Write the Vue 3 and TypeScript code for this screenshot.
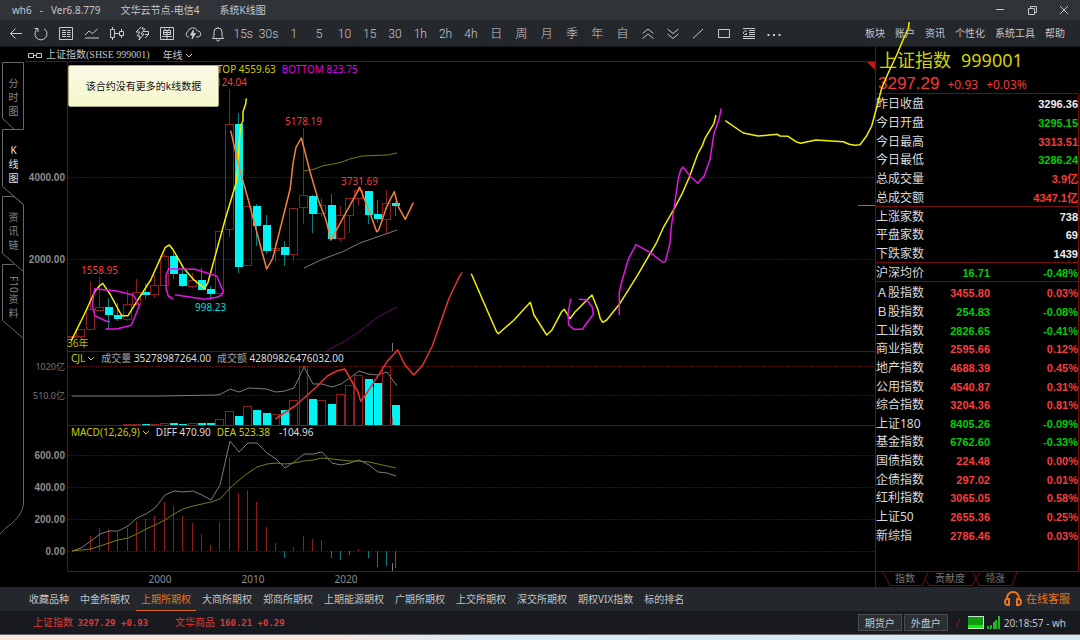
<script setup lang="ts">
interface QuoteRow {
  label: string
  value?: string
  change: string
  tone: 'up' | 'down' | 'flat'
}

const menus: string[] = ['板块', '账户', '资讯', '个性化', '系统工具', '帮助']
const periods: string[] = ['15s', '30s', '1', '5', '10', '15', '30', '1h', '2h', '4h', '日', '周', '月', '季', '年', '自']
const markets: string[] = ['收藏品种', '中金所期权', '上期所期权', '大商所期权', '郑商所期权', '上期能源期权', '广期所期权', '上交所期权', '深交所期权', '期权VIX指数', '标的排名']
const activeMarket = '上期所期权'
const sideTabs: { parts: string[]; active?: boolean }[] = [
  { parts: ['分', '时', '图'] },
  { parts: ['K', '线', '图'], active: true },
  { parts: ['资', '讯', '链'] },
  { parts: ['F10', '资', '料'] },
]

const quoteGroups: { name: string; rows: QuoteRow[] }[] = [
  {
    name: 'day',
    rows: [
      { label: '昨日收盘', change: '3296.36', tone: 'flat' },
      { label: '今日开盘', change: '3295.15', tone: 'down' },
      { label: '今日最高', change: '3313.51', tone: 'up' },
      { label: '今日最低', change: '3286.24', tone: 'down' },
      { label: '总成交量', change: '3.9亿', tone: 'up' },
      { label: '总成交额', change: '4347.1亿', tone: 'up' },
    ],
  },
  {
    name: 'breadth',
    rows: [
      { label: '上涨家数', change: '738', tone: 'flat' },
      { label: '平盘家数', change: '69', tone: 'flat' },
      { label: '下跌家数', change: '1439', tone: 'flat' },
    ],
  },
  { name: 'average', rows: [{ label: '沪深均价', value: '16.71', change: '-0.48%', tone: 'down' }] },
  {
    name: 'indices',
    rows: [
      { label: 'Ａ股指数', value: '3455.80', change: '0.03%', tone: 'up' },
      { label: 'Ｂ股指数', value: '254.83', change: '-0.08%', tone: 'down' },
      { label: '工业指数', value: '2826.65', change: '-0.41%', tone: 'down' },
      { label: '商业指数', value: '2595.66', change: '0.12%', tone: 'up' },
      { label: '地产指数', value: '4688.39', change: '0.45%', tone: 'up' },
      { label: '公用指数', value: '4540.87', change: '0.31%', tone: 'up' },
      { label: '综合指数', value: '3204.36', change: '0.81%', tone: 'up' },
      { label: '上证180', value: '8405.26', change: '-0.09%', tone: 'down' },
      { label: '基金指数', value: '6762.60', change: '-0.33%', tone: 'down' },
      { label: '国债指数', value: '224.48', change: '0.00%', tone: 'up' },
      { label: '企债指数', value: '297.02', change: '0.01%', tone: 'up' },
      { label: '红利指数', value: '3065.05', change: '0.58%', tone: 'up' },
      { label: '上证50', value: '2655.36', change: '0.25%', tone: 'up' },
      { label: '新综指', value: '2786.46', change: '0.03%', tone: 'up' },
    ],
  },
]

const yearX = (year: number): number => 72 + (year - 1990) * 9.27

/* [rising, body top, body bottom, wick top, wick bottom] for each year from 1990 */
const candleData: [number, number, number, number, number][] = [
  [1, 336, 337, 336, 337], [1, 329, 336, 329, 338], [1, 309, 329, 282, 329], [1, 307, 310, 277, 311],
  [0, 307, 315, 298, 329], [0, 315, 319, 303, 321], [1, 304, 319, 290, 321], [1, 292, 304, 279, 304],
  [0, 292, 295, 283, 299], [1, 285, 294, 275, 298], [1, 256, 285, 254, 285], [0, 256, 274, 249, 279],
  [0, 274, 286, 268, 287], [1, 280, 286, 273, 288], [0, 280, 290, 268, 290], [0, 289, 294, 286, 300],
  [1, 231, 293, 231, 294], [1, 124, 229, 89, 237], [0, 124, 267, 113, 273], [1, 206, 265, 206, 266],
  [0, 206, 226, 204, 246], [0, 225, 251, 215, 254], [1, 248, 250, 242, 262], [0, 247, 255, 241, 266],
  [1, 208, 254, 208, 261], [1, 195, 207, 128, 224], [0, 196, 214, 195, 233], [1, 205, 213, 198, 217],
  [0, 205, 239, 194, 240], [1, 215, 238, 206, 241], [1, 198, 215, 198, 233], [1, 190, 198, 187, 205],
  [0, 191, 215, 191, 224], [0, 214, 219, 200, 223], [1, 203, 219, 190, 234], [0, 203, 206, 201, 216],
]
const candles = candleData.map(([up, top, bottom, high, low], i) => ({
  up: up === 1, top, bottom, high, low, x: Math.round(yearX(1990 + i)),
}))

/* Top edge of each volume bar, from 1996 */
const volumeTops: number[] = [
  424, 424, 424, 424, 423, 423, 424, 423, 423, 423, 419, 411, 416, 406, 410, 413, 414, 410, 400, 366,
  399, 400, 404, 394, 385, 375, 379, 383, 366, 405,
]
const volumes = volumeTops.map((top, i) => ({ top, up: candles[i + 6].up, x: candles[i + 6].x }))

/* Histogram end of each MACD bar, from 1992 */
const macdEnds: number[] = [
  536, 528, 529, 532, 528, 521, 519, 516, 502, 506, 516, 523, 534, 545, 522, 458, 493, 490, 502, 527,
  543, 558, 547, 536, 539, 540, 558, 560, 555, 549, 558, 567, 566, 568,
]
const macdBars = macdEnds.map((end, i) => ({ end, x: Math.round(yearX(1992 + i)) }))

const perYear = (ys: number[]): string => ys.map((y, i) => `${Math.round(yearX(1990 + i))},${y}`).join(' ')
const diffLine = perYear([
  551, 548, 541, 534, 531, 531, 526, 518, 514, 508, 495, 491, 492, 491, 495, 500, 485, 441, 452, 443,
  443, 453, 459, 468, 462, 454, 454, 452, 463, 465, 463, 460, 465, 472, 473, 476,
])
const deaLine = perYear([
  551, 550, 549, 546, 543, 540, 538, 534, 529, 525, 520, 514, 509, 506, 504, 502, 499, 488, 480, 473,
  467, 464, 463, 464, 463, 461, 460, 458, 459, 460, 461, 461, 462, 464, 466, 468,
])
const openInterest = '72,396 160,396 217,395 221,394 230,389 239,392 249,388 266,389 276,392 285,391 294,388 304,367 313,384 322,384 332,387 341,384 350,378 359,371 368,374 378,375 387,372 397,386'

/* Pencil strokes are stored on a grid three times finer than the canvas. */
const stroke = (ox: number, oy: number, points: string): string =>
  points.split(' ').map((p) => {
    const [x, y] = p.split(',').map(Number)
    return `${(ox + x / 3).toFixed(1)},${(oy + y / 3).toFixed(1)}`
  }).join(' ')

const pencils: { tone: string; points: string }[] = [
  { tone: 'yellow', points: stroke(60, 220, '34,362 72,285 104,215 118,198 128,190 150,222 180,278 186,287 204,287 230,245 272,180 316,82 328,75 340,90 370,143 400,178 434,205 444,187 495,0 528,-110 534,-160 538,-240 542,-285 549,-297 549,-325 557,-348 559,-365') },
  { tone: 'orange', points: stroke(220, 60, '32,212 57,320 85,420 125,572 140,627 158,595 185,488 211,385 219,310 228,262 244,234 252,265 270,335 295,420 318,480 333,540 385,445 419,382 450,460 470,515 476,510 500,440 523,395 535,440 556,478 580,428') },
  { tone: 'magenta', points: stroke(60, 220, '150,305 138,303 104,287 97,255 104,206 170,213 220,225 238,257 214,316 170,327 136,327') },
  { tone: 'magenta', points: stroke(60, 220, '339,237 325,228 318,205 318,165 326,146 405,148 470,168 490,213 485,225 470,232 434,238 345,224') },
  { tone: 'red', points: stroke(0, 340, '826,237 885,198 950,140 982,108 1010,93 1034,87 1074,156 1082,184 1100,160 1163,62 1193,30 1215,75 1241,105 1268,75 1297,18 1347,-125 1378,-190 1386,-203') },
  { tone: 'yellow', points: stroke(400, 260, '214,41 270,170 290,216 295,221 340,182 391,127 402,165 440,225 455,211 485,155 493,148 510,176 525,156 576,105 594,150 601,176 608,187 620,180 658,133 710,50 770,-53 790,-97 822,-153 847,-200 868,-248 893,-318 907,-343 915,-365 942,-410 948,-435') },
  { tone: 'yellow', points: stroke(600, 90, '376,92 430,129 475,138 532,133 540,138 564,139 588,155 602,160 648,150 730,155 748,163 765,166 780,164 800,137 815,108 828,60 845,-5 862,-45 890,-105 910,-152 925,-185 928,-204') },
  { tone: 'magenta', points: stroke(400, 260, '512,116 504,160 506,195 522,208 547,208 580,163 577,142 560,119 536,118') },
  { tone: 'magenta', points: stroke(600, 90, '58,675 58,605 68,565 86,505 108,464 150,487 187,516 196,515 210,460 214,410 222,355 235,265 242,240 249,231 270,258 293,280 313,257 330,208 342,130 357,88 364,55') },
]

const gridRows: number[] = [177, 259, 366, 395, 455, 487, 519, 551]
const frameRows: number[] = [351, 425, 571]
const axisLabels: { y: number; text: string; light?: boolean }[] = [
  { y: 181, text: '4000.00' }, { y: 263, text: '2000.00' },
  { y: 370, text: '1020亿', light: true }, { y: 399, text: '510.0亿', light: true },
  { y: 459, text: '600.00' }, { y: 491, text: '400.00' }, { y: 523, text: '200.00' }, { y: 555, text: '0.00' },
]
</script>

<template>
  <div class="app">
    <header class="titlebar">
      <span class="caption version"><span>wh6</span><span>-</span><span>Ver6.8.779</span></span>
      <span class="caption">文华云节点-电信4</span>
      <span class="caption">系统K线图</span>
      <div class="window-controls">
        <button type="button" aria-label="最小化"><svg width="12" height="12"><path d="M2 5.500H10" /></svg></button>
        <button type="button" aria-label="还原"><svg width="12" height="12"><path d="M2.500 4.500H8.500V10.500H2.500ZM4.500 4.500V2.500H10.500V8.500H8.500" /></svg></button>
        <button type="button" aria-label="关闭"><svg width="12" height="12"><path d="M2 2L10 10M10 2L2 10" /></svg></button>
      </div>
    </header>

    <nav class="toolbar" aria-label="工具栏">
      <div class="tools">
        <button type="button" aria-label="后退"><svg viewBox="0 0 18 18"><path d="M15 8.500H3.500M8.500 3.500L3.500 8.500L8.500 13.500" /></svg></button>
        <button type="button" aria-label="刷新"><svg viewBox="0 0 18 18"><path d="M5.500 4A6 6 0 1 0 12 3.700M2.500 3.500H6V7" /></svg></button>
        <button type="button" aria-label="报价"><svg viewBox="0 0 18 18"><path d="M2.500 2.500H15.500V14.500H2.500ZM5 5.500H9M10 5.500H13.500M5 7.500H9M10 7.500H13.500M5 9.500H9M10 9.500H13.500M5 11.500H9M10 11.500H13.500" /></svg></button>
        <button type="button" aria-label="分时"><svg viewBox="0 0 18 18"><path d="M2 10L6 6L9.500 8.500L14.500 4M2 13H16" /></svg></button>
        <button type="button" aria-label="K线"><svg viewBox="0 0 18 18"><path d="M2.500 4.500H6.500V12.500H2.500ZM4.500 2V4.500M4.500 12.500V15M6.500 8.500H11.500M11.500 6.500H15.500V10.500H11.500ZM13.500 4V6.500M13.500 10.500V13" /></svg></button>
        <button type="button" aria-label="闪电"><svg viewBox="0 0 18 18"><path d="M8 2L3 7H7L4 11H7L6 15L11 9H8L12 4H9L10 2M10 6.500H15.500V9.500L12 13M12 9.500H16" /></svg></button>
        <button type="button" aria-label="下单"><svg viewBox="0 0 18 18"><path d="M2.500 2.500H15.500V14.500H2.500ZM5.500 5.500H12.500V9.500H5.500ZM5.500 7.500H12.500M4 11.500H14M9 5V14M6.500 3.500L7.500 5M11.500 3.500L10.500 5" /></svg></button>
        <button type="button" aria-label="云"><svg viewBox="0 0 18 18"><path d="M5 12H4A3 3 0 0 1 4 6.500A5 5 0 0 1 13.500 6A3 3 0 0 1 14 12H12" /><path d="M9.500 5L6.500 10H9L8 14L11.500 8.500H9Z" fill="currentColor" /></svg></button>
        <button type="button" aria-label="提醒"><svg viewBox="0 0 18 18"><path d="M3.500 13.500H14.500L13 11.500V7A4 4 0 0 0 5 7V11.500ZM7.500 14.500A1.500 1.500 0 0 0 10.500 14.500M9 2V3" /></svg></button>
        <button v-for="p in periods" :key="p" type="button">{{ p }}</button>
        <button type="button" aria-label="放大"><svg viewBox="0 0 18 18"><path d="M3.500 8.500L9 4L14.500 8.500M3.500 13.500L9 9L14.500 13.500" /></svg></button>
        <button type="button" aria-label="缩小"><svg viewBox="0 0 18 18"><path d="M3.500 4L9 8.500L14.500 4M3.500 9L9 13.500L14.500 9" /></svg></button>
        <button type="button" aria-label="直线"><svg viewBox="0 0 18 18"><path d="M4 13.500L14 4" /></svg></button>
        <button type="button" aria-label="矩形"><svg viewBox="0 0 18 18"><path d="M3.500 4.500H14.500V12.500H3.500Z" /></svg></button>
        <button type="button" aria-label="列表"><svg viewBox="0 0 18 18"><path d="M3 3.500H15M9 5.500H15M9 7.500H15M9 9.500H15M3 11.500H15M3 13.500H15M7 6H4.500A2 2 0 0 0 4.500 9.500H6.500V8" /></svg></button>
        <button type="button" aria-label="更多"><svg viewBox="0 0 18 18"><path d="M2.500 10H4.500M8 10H10M13.500 10H15.500" class="dots" /></svg></button>
      </div>
      <div class="menus">
        <button v-for="m in menus" :key="m" type="button">{{ m }}</button>
      </div>
    </nav>

    <main class="workspace">
      <section class="stage">
        <div class="side-tabs">
          <button v-for="(tab, i) in sideTabs" :key="i" type="button" :class="{ active: tab.active }">
            <span v-for="part in tab.parts" :key="part" :class="{ sideways: part.length > 1 }">{{ part }}</span>
          </button>
        </div>

        <div class="chart-column">
          <div class="chart-head">
            <svg class="link" width="14" height="8"><path d="M.5 2.500H5.500V6.500H.5ZM8.500 2.500H13.500V6.500H8.500ZM5.500 4.500H8.500" /></svg>
            <h1>上证指数(SHSE 999001)</h1>
            <button type="button">年线<svg width="8" height="6"><path d="M1 1L4 4L7 1" /></svg></button>
          </div>
        </div>

        <svg class="canvas" aria-hidden="true">
          <g transform="translate(0 -47)">
            <g class="tab-frame">
              <path d="M23.500 129.500V62.500H2.500V118.500L14.500 129.500M23.500 129.500H2.500V186.500L23.500 204.500V503C23 512 17 519 11 524Q5 528 0 534M14 196.500H2.500V253.500L23.500 271.500M14 196.500L23.500 204.500M14 264.500H2.500V320.500L23.500 338.500" />
            </g>
            <g class="grid-lines">
              <line v-for="y in gridRows" :key="y" x1="68" :y1="y + 0.5" x2="100%" :y2="y + 0.5" />
            </g>
            <g class="frame">
              <line x1="25" y1="61.500" x2="100%" y2="61.500" />
              <line v-for="y in frameRows" :key="y" x1="67" :y1="y + 0.5" x2="100%" :y2="y + 0.5" />
              <line x1="67.500" y1="61" x2="67.500" y2="572" />
            </g>
            <svg x="100%" class="spill"><path class="corner" d="M-8 62H0V70Z" /><path class="cursor" d="M-17 205.500H0" /></svg>

            <g v-for="c in candles" :key="c.x" :class="c.up ? 'rise' : 'fall'">
              <path :d="`M${c.x - 0.5} ${c.high}V${c.top}M${c.x - 0.5} ${c.bottom}V${c.low}`" />
              <rect v-if="c.up" :x="c.x - 4.5" :y="c.top + 0.5" width="8" :height="c.bottom - c.top" />
              <rect v-else :x="c.x - 4" :y="c.top" width="8" :height="c.bottom - c.top" />
            </g>
            <polyline class="band-top" points="304,171 315,169 322,166 333,164 342,162 350,159 362,156 387,155 397,153" />
            <polyline class="band-mid" points="304,268 323,259 342,252 360,243 397,230" />
            <polyline class="band-low" points="326,351 345,341 360,331 375,319 385,313 397,307" />

            <g v-for="v in volumes" :key="v.x" :class="v.up ? 'rise' : 'fall'">
              <rect v-if="v.up" :x="v.x - 4.5" :y="v.top + 0.5" width="8" :height="425 - v.top" />
              <rect v-else :x="v.x - 4" :y="v.top" width="8" :height="425 - v.top" />
            </g>
            <polyline class="band-mid" :points="openInterest" />

            <path v-for="m in macdBars" :key="m.x" :class="m.end < 551 ? 'macd-rise' : 'macd-fall'" :d="`M${m.x - 0.5} 551V${m.end}`" />
            <polyline class="band-mid" :points="diffLine" />
            <polyline class="band-top" :points="deaLine" />
            <path class="cursor" d="M392.500 343V351M392.500 417V425M392.500 563V571" />

            <g class="axis">
              <text v-for="a in axisLabels" :key="a.y" x="65" :y="a.y" :class="{ light: a.light }">{{ a.text }}</text>
            </g>
            <g class="years">
              <text x="160" y="583">2000</text>
              <text x="253" y="583">2010</text>
              <text x="346" y="583">2020</text>
            </g>
            <g class="marks">
              <text x="210" y="86">6124.04</text>
              <text x="285" y="125">5178.19</text>
              <text x="341" y="185">3731.69</text>
              <text x="81" y="274">1558.95</text>
              <text x="195" y="311" class="low">998.23</text>
              <text x="67" y="347" class="age">36年</text>
            </g>
            <polyline v-for="(p, i) in pencils" :key="i" class="pencil" :class="p.tone" :points="p.points" />
          </g>
        </svg>

        <div class="legend price"><span class="yellow">TOP 4559.63</span><span class="magenta">BOTTOM 823.75</span></div>
        <div class="legend volume">
          <button type="button">CJL<svg width="8" height="6"><path d="M1 1L4 4L7 1" /></svg></button>
          <span><i>成交量</i> 35278987264.00</span><span><i>成交额</i> 42809826476032.00</span>
        </div>
        <div class="legend macd">
          <button type="button">MACD(12,26,9)<svg width="8" height="6"><path d="M1 1L4 4L7 1" /></svg></button>
          <span>DIFF 470.90</span><span class="yellow">DEA 523.38</span><span class="last">-104.96</span>
        </div>
        <div class="notice" role="status">该合约没有更多的k线数据</div>
      </section>

      <aside class="quotes">
        <div class="quote-head">
          <h2><span>上证指数</span><span>999001</span></h2>
          <p><strong>3297.29</strong><span>+0.93</span><span>+0.03%</span></p>
        </div>
        <div v-for="g in quoteGroups" :key="g.name" class="group" :class="g.name">
          <table>
            <tbody>
              <tr v-for="r in g.rows" :key="r.label" :class="r.tone">
                <th scope="row">{{ r.label }}</th>
                <td class="value">{{ r.value }}</td>
                <td class="change">{{ r.change }}</td>
              </tr>
            </tbody>
          </table>
        </div>
        <div class="quote-tabs">
          <svg width="204" height="15" aria-hidden="true"><path d="M7 0L14 13.500H46L52 0M49 7L53 13.500H96L104 0M97 0L103 13.500H136L141 0" /></svg>
          <button type="button">指数</button>
          <button type="button">贡献度</button>
          <button type="button">领涨</button>
        </div>
      </aside>
    </main>

    <nav class="markets" aria-label="市场">
      <a v-for="m in markets" :key="m" href="#" :class="{ active: m === activeMarket }">{{ m }}</a>
      <button type="button" class="service">
        <svg width="18" height="16"><path d="M3 9V7A6 6 0 0 1 15 7V9M3.500 8A2.500 3 0 0 0 3.500 14H5V8ZM14.500 8A2.500 3 0 0 1 14.500 14H13V8Z" /></svg>
        在线客服
      </button>
    </nav>

    <footer class="statusbar">
      <span class="ticker">上证指数 <b>3297.29 +0.93</b></span>
      <span class="ticker">文华商品 <b>160.21 +0.29</b></span>
      <div class="status-right">
        <button type="button">期货户</button>
        <button type="button">外盘户</button>
        <svg class="slash" width="10" height="12"><path d="M3 11L7 2" /></svg>
        <svg width="16" height="14"><path d="M0 0H16V13H0Z" fill="#c8e8c8" /><path d="M0 1H15V9H0Z" fill="#119a11" /><path d="M0 9H15V12H0Z" fill="#00f600" /></svg>
        <svg class="signal" width="13" height="14"><path d="M0 10H2V13H0ZM3 9H5V13H3ZM6 6H8V13H6ZM8 4H10V13H8ZM11 0H13V13H11Z" fill="#22b422" /></svg>
        <span>20:18:57 - wh</span>
      </div>
    </footer>
    <div class="desktop-edge"></div>
  </div>
</template>

<style>
body {
  margin: 0;
  background: #000;
}
</style>

<style scoped>
.app {
  display: flex;
  flex-direction: column;
  min-height: 100vh;
  background: #000;
  color: #c4c6c9;
  font: 10px/14px "Noto Sans", "Noto Sans CJK SC", sans-serif;
}
button {
  margin: 0;
  padding: 0;
  border: 0;
  background: none;
  color: inherit;
  font: inherit;
}
svg {
  fill: none;
  stroke: currentColor;
}
.titlebar {
  display: flex;
  align-items: center;
  gap: 20px;
  height: 20px;
  padding-left: 12px;
  background: #303338;
}
.version {
  display: flex;
  gap: 8px;
}
.window-controls {
  display: flex;
  gap: 20px;
  margin-left: auto;
  padding-right: 10px;
}
.window-controls button,
.window-controls svg,
.tools svg {
  display: block;
}
.toolbar {
  display: flex;
  align-items: center;
  justify-content: space-between;
  height: 26px;
  border-bottom: 1px solid #141619;
  background: #24272b;
}
.tools {
  display: grid;
  grid-template-columns: repeat(31, 1fr);
  flex: 0 0 784px;
  margin-left: 3px;
}
.tools button {
  display: flex;
  align-items: center;
  justify-content: center;
  height: 26px;
  padding-top: 1px;
  color: #c9cacc;
  font: 300 12px/20px Roboto, "Noto Sans CJK SC", sans-serif;
}
.tools svg {
  width: 18px;
  height: 18px;
}
.tools .dots {
  stroke-width: 2;
}
.menus {
  display: flex;
  gap: 10px;
  padding-right: 15px;
}
.workspace {
  display: flex;
  flex: 1;
  min-height: 540px;
}
.stage {
  position: relative;
  display: flex;
  flex: 1;
}
.side-tabs {
  display: flex;
  flex-direction: column;
  width: 25px;
  padding-top: 15px;
}
.side-tabs button {
  display: flex;
  flex-direction: column;
  align-items: center;
  justify-content: center;
  height: 67px;
  padding: 3px 0 0 2px;
  color: #85878a;
  line-height: 14px;
}
.side-tabs .active {
  color: #e4e4e4;
}
.sideways {
  writing-mode: vertical-rl;
}
.chart-column {
  flex: 1;
}
.chart-head {
  display: flex;
  align-items: center;
  height: 15px;
  padding-left: 3px;
}
.chart-head h1 {
  margin: 0 13px 0 4px;
  font: 10px/14px "Liberation Serif", "Noto Sans CJK SC", serif;
}
.chart-head svg,
.legend button svg {
  margin-left: 2px;
}
.chart-head .link {
  margin-left: 0;
}
.canvas {
  position: absolute;
  z-index: 2;
  inset: 0;
  width: 100%;
  height: 100%;
  overflow: visible;
  pointer-events: none;
}
.spill {
  overflow: visible;
}
.tab-frame {
  stroke: #68686a;
}
.grid-lines {
  stroke: #5c0505;
  stroke-dasharray: 2 1;
}
.frame {
  stroke: #740c0c;
}
.corner {
  fill: #c41818;
  stroke: none;
}
.cursor {
  stroke: #777;
}
.rise {
  stroke: #8c1e1e;
}
.fall {
  stroke: #067f7f;
}
.fall rect {
  fill: #00f4f4;
  stroke: none;
}
.band-top {
  stroke: #7d7d0c;
}
.band-mid {
  stroke: #7c7c7c;
}
.band-low {
  stroke: #6c006c;
}
.macd-rise {
  stroke: #8c1e1e;
}
.macd-fall {
  stroke: #067f7f;
}
.canvas text {
  stroke: none;
}
.axis text {
  fill: #8c8c8c;
  font: bold 10px "Liberation Sans", sans-serif;
  text-anchor: end;
}
.axis .light {
  fill: #777;
  font: 9px "Noto Sans", "Noto Sans CJK SC", sans-serif;
}
.years text {
  fill: #8c8c8c;
  text-anchor: middle;
}
.marks text {
  fill: #f23c3c;
}
.marks .low {
  fill: #00dede;
}
.marks .age {
  fill: #baba10;
}
.pencil {
  stroke-width: 1.5;
  stroke-linejoin: round;
}
.pencil.yellow {
  stroke: #f0f000;
}
.pencil.orange {
  stroke: #f08238;
}
.pencil.magenta {
  stroke: #e414e4;
}
.pencil.red {
  stroke: #e83030;
}
.legend {
  position: absolute;
  display: flex;
  gap: 6px;
  color: #dcdcdc;
}
.legend i {
  color: #a4a4a4;
  font-style: normal;
}
.legend.price {
  top: 15px;
  left: 217px;
}
.legend.volume {
  top: 304px;
  left: 71px;
}
.legend.macd {
  top: 378px;
  left: 71px;
}
.legend button,
.legend .yellow {
  color: #cccc08;
}
.legend .magenta {
  color: #e000e0;
}
.legend .last {
  padding-left: 3px;
}
.notice {
  position: absolute;
  z-index: 3;
  top: 18px;
  left: 68px;
  box-sizing: border-box;
  padding: 13px 16px;
  width: 151px;
  border: 1px solid #a8a878;
  border-radius: 2px;
  background: linear-gradient(#fbf8e6, #f5f8cc);
  color: #111;
  text-align: center;
  white-space: nowrap;
}
.quotes {
  display: flex;
  flex-direction: column;
  flex: 0 0 203px;
  margin-right: 1px;
  border-left: 1px solid #740c0c;
}
.quote-head {
  height: 46px;
  padding-left: 2px;
}
.quote-head h2 {
  display: flex;
  gap: 10px;
  margin: 0;
  padding-left: 1px;
  color: #d2d208;
  font-weight: 400;
  font-size: 18px;
  line-height: 27px;
}
.quote-head p {
  display: flex;
  align-items: baseline;
  gap: 8px;
  margin: 0;
  color: #f03a3a;
  font-size: 12px;
  line-height: 20px;
}
.quote-head strong {
  font: 17px/20px "Liberation Sans", sans-serif;
}
.group {
  border-top: 1px solid #740c0c;
  border-right: 1px solid #740c0c;
}
.group table {
  width: 100%;
  height: 18px;
  border-collapse: collapse;
  table-layout: fixed;
}
.day table {
  height: 112px;
}
.breadth table {
  height: 55px;
}
.indices {
  flex: 1;
  padding-top: 2px;
  border-bottom: 1px solid #740c0c;
}
.indices table {
  height: 261px;
}
.group th,
.group td {
  padding: 2px 0 0;
}
.indices th,
.indices td {
  padding-top: 0;
}
.group th {
  width: 60px;
  color: #dadada;
  font-weight: 400;
  font-size: 12px;
  line-height: 16px;
  text-align: left;
  white-space: nowrap;
}
.group td {
  font: bold 11px/16px "Liberation Sans", "Noto Sans CJK SC", sans-serif;
  text-align: right;
  white-space: nowrap;
}
.group .value {
  width: 54px;
}
.up td {
  color: #f93c3c;
}
.down td {
  color: #00cc08;
}
.flat td {
  color: #ececec;
}
.quote-tabs {
  position: relative;
  display: flex;
  align-items: flex-start;
  gap: 20px;
  height: 15px;
  padding-left: 19px;
  color: #777;
  line-height: 12px;
}
.quote-tabs svg {
  position: absolute;
  left: 0;
  top: 0;
  color: #740c0c;
}
.markets {
  display: flex;
  align-items: center;
  gap: 1px;
  height: 24px;
  padding: 0 10px 0 24px;
  background: #24272b;
}
.markets a {
  padding: 3px 5px;
  border-bottom: 1px solid transparent;
  color: #c2c3c5;
  line-height: 16px;
  text-decoration: none;
}
.markets .active {
  border-color: #e06a1c;
  color: #f0701c;
}
.service {
  display: flex;
  align-items: center;
  gap: 4px;
  margin-left: auto;
  color: #f0741c;
  font-size: 11px;
}
.service svg {
  stroke-width: 2;
}
.statusbar {
  display: flex;
  align-items: center;
  gap: 27px;
  height: 23px;
  padding: 0 14px 0 33px;
  border-bottom: 1px solid #66686b;
  background: #191a1f;
}
.ticker {
  color: #dc3a3a;
}
.ticker b {
  padding-left: 2px;
  font: bold 9px/14px "DejaVu Sans Mono", monospace;
}
.status-right {
  display: flex;
  align-items: center;
  gap: 3px;
  margin-left: auto;
}
.status-right button {
  width: 44px;
  height: 17px;
  border: 1px solid #484b50;
  background: #2b2f34;
  line-height: 14px;
}
.status-right button + button {
  margin-left: -1px;
}
.status-right svg {
  stroke: none;
}
.status-right .slash {
  margin: 0 2px;
  stroke: #8c1c1c;
}
.signal {
  margin-right: 1px;
}
.desktop-edge {
  height: 5px;
  background: linear-gradient(90deg, #fde5dc, #fbe6de 30%, #d9ebf3 45%, #d6e9f2);
}
</style>
